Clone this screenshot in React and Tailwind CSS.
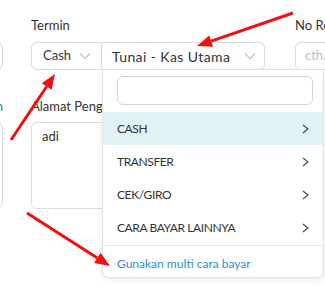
import React from "react";

const rows = ["CASH", "TRANSFER", "CEK/GIRO", "CARA BAYAR LAINNYA"];

function ChevronDown() {
  return (
    <svg width="12" height="8" viewBox="0 0 12 8" fill="none" stroke="#c4c4c4" strokeWidth="1.2">
      <path d="M1 1.5 L6 6.5 L11 1.5" />
    </svg>
  );
}

function ChevronRight() {
  return (
    <svg width="7" height="10" viewBox="0 0 7 10" fill="none" stroke="#444" strokeWidth="1.1">
      <path d="M1 1 L6 5 L1 9" />
    </svg>
  );
}

function Arrow({ x1, y1, x2, y2 }) {
  const a = Math.atan2(y2 - y1, x2 - x1);
  const len = 15;
  const w = 6;
  const bx = x2 - len * Math.cos(a);
  const by = y2 - len * Math.sin(a);
  const px = -Math.sin(a) * w;
  const py = Math.cos(a) * w;
  return (
    <g>
      <line x1={x1} y1={y1} x2={bx} y2={by} stroke="#f01010" strokeWidth="3" />
      <polygon points={`${x2},${y2} ${bx + px},${by + py} ${bx - px},${by - py}`} fill="#f01010" />
    </g>
  );
}

export default function App() {
  return (
    <div
      className="relative w-[325px] h-[291px] overflow-hidden bg-white text-[13px] text-[#333]"
      style={{ fontFamily: "Lato, sans-serif" }}
    >
      <div className="flex pt-[16px]">
        {/* left, cut off column */}
        <div className="w-[3px] shrink-0 flex flex-col">
          <div className="h-[19px]" />
          <div className="mt-[7px] h-[28px] w-[100px] -ml-[97px] border border-[#dcdcdc] rounded-md" />
          <div className="mt-[27px] h-[18px] w-[100px] -ml-[97px] text-right text-[#1f7fb8] leading-[18px]">n</div>
          <div className="mt-[7px] h-[87px] w-[100px] -ml-[97px] border border-[#dcdcdc] rounded-md" />
        </div>

        {/* Termin column */}
        <div className="ml-[28px] w-[234px] shrink-0 flex flex-col">
          <div className="h-[19px] leading-[19px]">Termin</div>
          <div className="mt-[7px] flex h-[28px]">
            <div className="w-[71px] flex items-center justify-between pl-[11px] pr-[10px] border border-[#dcdcdc] rounded-l-md">
              <span>Cash</span>
              <ChevronDown />
            </div>
            <div className="flex-1 flex items-center justify-between pl-[10px] pr-[8px] border border-l-0 border-[#dcdcdc] rounded-r-md">
              <span className="text-[14px] tracking-[0.4px]">Tunai - Kas Utama</span>
              <ChevronDown />
            </div>
          </div>
          <div className="mt-[27px] h-[18px] leading-[18px]">Alamat Pengiriman</div>
          <div className="mt-[7px] h-[87px] w-[120px] border border-[#dcdcdc] rounded-md pl-[10px] pt-[4px]">adi</div>
        </div>

        {/* No Ref column */}
        <div className="ml-[30px] w-[120px] shrink-0 flex flex-col">
          <div className="h-[19px] leading-[19px]">No Referensi</div>
          <div className="mt-[7px] h-[28px] border border-[#dcdcdc] rounded-md flex items-center pl-[9px] text-[#bdbdbd]">
            cth. 001
          </div>
        </div>
      </div>

      {/* dropdown */}
      <div className="absolute left-[102px] top-[69px] w-[222px] h-[209px] bg-white border border-[#e2e2e2] rounded-b-md shadow-[0_2px_6px_rgba(0,0,0,0.08)] flex flex-col">
        <div className="mt-[6px] ml-[14px] w-[196px] h-[29px] border border-[#d6d6d6] rounded-md" />
        <div className="mt-[7px] flex flex-col">
          {rows.map((r, i) => (
            <div
              key={r}
              className={
                "h-[33px] flex items-center justify-between pl-[14px] pr-[14px] text-[12px] tracking-[-0.4px] " +
                (i === 0 ? "bg-[#e1f2f5]" : "")
              }
            >
              <span>{r}</span>
              <ChevronRight />
            </div>
          ))}
        </div>
        <div className="mt-[1px] border-t border-[#e6e6e6] flex-1 flex items-center pl-[14px] pt-[4px] text-[12px] text-[#2a8ee0]">
          Gunakan multi cara bayar
        </div>
      </div>

      {/* annotation arrows */}
      <svg className="absolute left-0 top-0" width="325" height="291">
        <Arrow x1={293} y1={13} x2={197} y2={46} />
        <Arrow x1={11} y1={140} x2={55} y2={74} />
        <Arrow x1={27} y1={213} x2={110} y2={266} />
      </svg>
    </div>
  );
}
